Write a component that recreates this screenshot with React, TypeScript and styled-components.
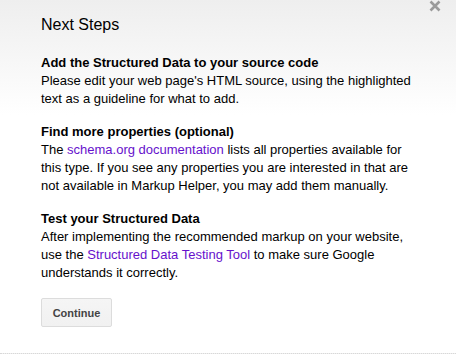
import React from 'react';
import styled, { createGlobalStyle } from 'styled-components';

const GlobalStyle = createGlobalStyle`
  html, body {
    margin: 0;
    padding: 0;
    background: #ffffff;
  }
`;

export default function App() {
  const sections = [
    {
      title: 'Add the Structured Data to your source code',
      body: (
        <>Please edit your web page&apos;s HTML source, using the highlighted text as a guideline for what to add.</>
      ),
    },
    {
      title: 'Find more properties (optional)',
      body: (
        <>
          The <Link href="#">schema.org documentation</Link> lists all properties available for this type. If you
          see any properties you are interested in that are not available in Markup Helper, you may add them
          manually.
        </>
      ),
    },
    {
      title: 'Test your Structured Data',
      body: (
        <>
          After implementing the recommended markup on your website, use the{' '}
          <Link href="#">Structured Data Testing Tool</Link> to make sure Google understands it correctly.
        </>
      ),
    },
  ];

  return (
    <>
      <GlobalStyle />
      <Dialog>
        <Close aria-label="Close">
          <svg width="12" height="12" viewBox="0 0 12 12">
            <path d="M1.5 1.5 L10.5 10.5 M10.5 1.5 L1.5 10.5" stroke="#9a9a9a" strokeWidth="2.6" />
          </svg>
        </Close>
        <Title>Next Steps</Title>
        {sections.map((s) => (
          <Section key={s.title}>
            <Heading>{s.title}</Heading>
            <Text>{s.body}</Text>
          </Section>
        ))}
        <Button>Continue</Button>
      </Dialog>
    </>
  );
}

const Dialog = styled.div`
  position: relative;
  box-sizing: border-box;
  width: 456px;
  height: 354px;
  padding: 15px 0 0 41px;
  font-family: "Liberation Sans", Arial, sans-serif;
  color: #000000;
  background: linear-gradient(#eeeeee 0, #ffffff 115px);
  border-bottom: 1px dotted #d8d8d8;
  overflow: hidden;
`;

const Close = styled.button`
  position: absolute;
  top: 0;
  right: 15px;
  width: 12px;
  height: 12px;
  padding: 0;
  border: 0;
  background: none;
  display: flex;
`;

const Title = styled.h1`
  margin: 0 0 19px;
  font-size: 16px;
  line-height: 20px;
  font-weight: normal;
`;

const Section = styled.div`
  width: 376px;
  margin-bottom: 15px;
  font-size: 13px;
  line-height: 18px;
`;

const Heading = styled.div`
  font-weight: bold;
`;

const Text = styled.div``;

const Link = styled.a`
  color: #6611cc;
  text-decoration: none;
`;

const Button = styled.button`
  display: block;
  box-sizing: border-box;
  width: 71px;
  height: 29px;
  margin-top: 16px;
  padding: 0;
  border: 1px solid #dcdcdc;
  border-radius: 2px;
  background: linear-gradient(#f5f5f5, #f1f1f1);
  font-family: "Liberation Sans", Arial, sans-serif;
  font-size: 11px;
  font-weight: bold;
  color: #444444;
`;
